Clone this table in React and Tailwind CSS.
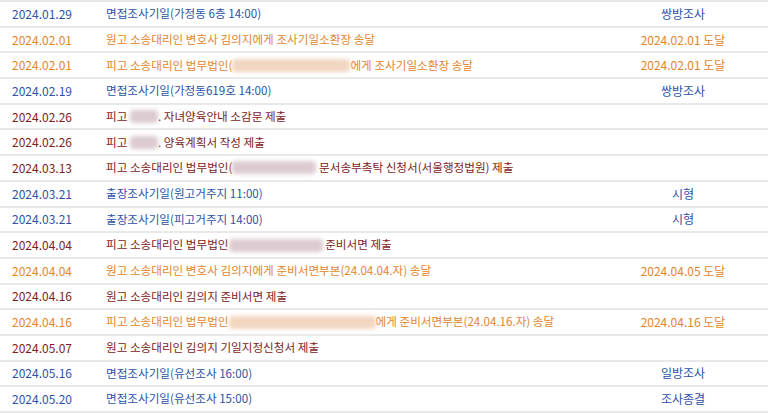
import React from 'react';

const tone = {
  blue: 'text-[#2d52a6]',
  orange: 'text-[#e2862c]',
  red: 'text-[#7d2222]',
};

const blurTone = {
  orange: 'bg-[#f2d6c0]',
  red: 'bg-[#dccbd0]',
};

// blurred (masked) name
const Mask = ({ w, color }) => (
  <span
    className={`inline-block h-[13px] align-middle rounded-sm blur-[2px] ${blurTone[color]}`}
    style={{ width: w }}
  />
);

const rows = [
  { date: '2024.01.29', c: 'blue', text: ['면접조사기일(가정동 6층 14:00)'], note: '쌍방조사' },
  { date: '2024.02.01', c: 'orange', text: ['원고 소송대리인 변호사 김의지에게 조사기일소환장 송달'], note: '2024.02.01 도달' },
  { date: '2024.02.01', c: 'orange', text: ['피고 소송대리인 법무법인(', 118, '에게 조사기일소환장 송달'], note: '2024.02.01 도달' },
  { date: '2024.02.19', c: 'blue', text: ['면접조사기일(가정동619호 14:00)'], note: '쌍방조사' },
  { date: '2024.02.26', c: 'red', text: ['피고 ', 28, '. 자녀양육안내 소감문 제출'] },
  { date: '2024.02.26', c: 'red', text: ['피고 ', 28, '. 양육계획서 작성 제출'] },
  { date: '2024.03.13', c: 'red', text: ['피고 소송대리인 법무법인(', 84, ' 문서송부촉탁 신청서(서울행정법원) 제출'] },
  { date: '2024.03.21', c: 'blue', text: ['출장조사기일(원고거주지 11:00)'], note: '시형' },
  { date: '2024.03.21', c: 'blue', text: ['출장조사기일(피고거주지 14:00)'], note: '시형' },
  { date: '2024.04.04', c: 'red', text: ['피고 소송대리인 법무법인', 94, ' 준비서면 제출'] },
  { date: '2024.04.04', c: 'orange', text: ['원고 소송대리인 변호사 김의지에게 준비서면부본(24.04.04.자) 송달'], note: '2024.04.05 도달' },
  { date: '2024.04.16', c: 'red', text: ['원고 소송대리인 김의지 준비서면 제출'] },
  { date: '2024.04.16', c: 'orange', text: ['피고 소송대리인 법무법인', 147, '에게 준비서면부본(24.04.16.자) 송달'], note: '2024.04.16 도달' },
  { date: '2024.05.07', c: 'red', text: ['원고 소송대리인 김의지 기일지정신청서 제출'] },
  { date: '2024.05.16', c: 'blue', text: ['면접조사기일(유선조사 16:00)'], note: '일방조사' },
  { date: '2024.05.20', c: 'blue', text: ['면접조사기일(유선조사 15:00)'], note: '조사종결' },
];

export default function App() {
  return (
    <div
      className="w-[768px] h-[413px] overflow-hidden bg-white text-[12px]"
      style={{ fontFamily: '"Noto Sans CJK KR", "Noto Sans", sans-serif' }}
    >
      <div className="border-b-2 border-[#e9e9e9]">
        {rows.map((r, i) => (
          <div
            key={i}
            className={`flex items-center h-[25.7px] border-t-2 border-[#e9e9e9] ${tone[r.c]}`}
          >
            <div className="w-[106px] shrink-0 pl-3">{r.date}</div>
            <div className="flex-1 whitespace-nowrap flex items-center text-[11.6px]">
              {r.text.map((t, j) =>
                typeof t === 'number' ? (
                  <Mask key={j} w={t} color={r.c} />
                ) : (
                  <span key={j} className="whitespace-pre">{t}</span>
                )
              )}
            </div>
            <div className="w-[170px] shrink-0 text-center">{r.note || ''}</div>
          </div>
        ))}
      </div>
    </div>
  );
}
